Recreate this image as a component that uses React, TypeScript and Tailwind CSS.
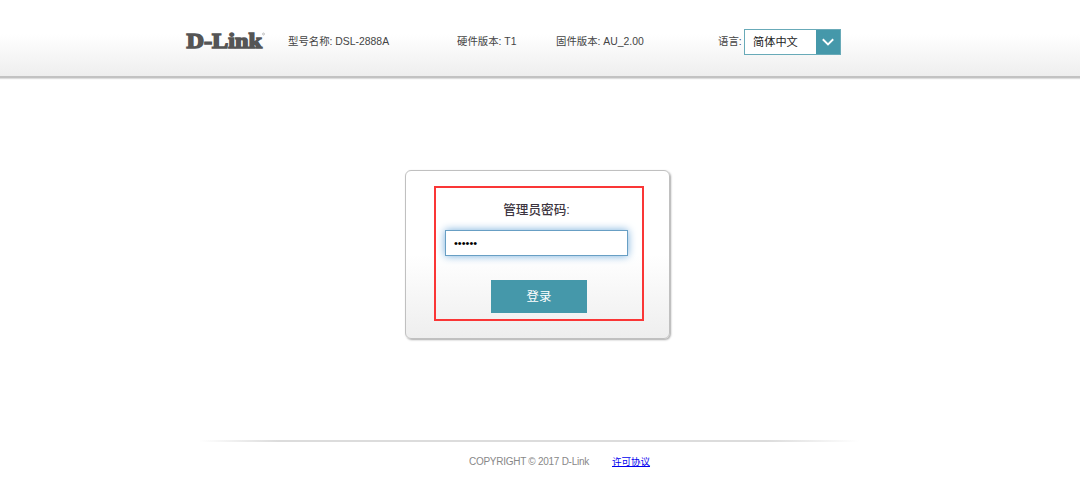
import { useState } from 'react'

const info = [
  { label: '型号名称', value: 'DSL-2888A', width: 'w-[169px]' },
  { label: '硬件版本', value: 'T1', width: 'w-[99px]' },
  { label: '固件版本', value: 'AU_2.00', width: 'w-[162px]' },
]

function Logo() {
  return (
    <svg width="84" height="28" viewBox="0 0 84 28" className="shrink-0" role="img" aria-label="D-Link">
      <text
        x="1.5"
        y="19.8"
        textLength="75.5"
        lengthAdjust="spacingAndGlyphs"
        className="fill-[#555555] stroke-[#555555] font-['Liberation_Serif',serif] text-[21.8px] font-bold"
        strokeWidth="1.5"
      >
        D-Link
      </text>
      <circle cx="78.5" cy="6" r="1" fill="none" stroke="#aaaaaa" strokeWidth="0.7" />
    </svg>
  )
}

function LanguageSelect() {
  return (
    <button className="flex h-[26px] w-[97px] border border-[#68aab8] bg-white text-left">
      <span className="flex-1 pl-2 text-[11.2px] leading-6 text-[#222222]">简体中文</span>
      <span className="flex h-full w-6 items-center justify-center bg-[#4598aa]">
        <svg width="12" height="8" viewBox="0 0 12 8" fill="none" stroke="white" strokeWidth="1.9">
          <path d="M.8 1.3 6 6.4l5.2-5.1" />
        </svg>
      </span>
    </button>
  )
}

export default function App() {
  const [password, setPassword] = useState('123456')

  return (
    <div className="flex h-[478px] w-[1080px] flex-col overflow-hidden bg-white font-['Liberation_Sans','Noto_Sans_CJK_SC',sans-serif]">
      {/* Header */}
      <header className="h-[78px] shrink-0 border-b-2 border-[#c2c2c2] bg-linear-to-b from-white from-45% to-[#eeeeee] pt-7 pl-[185px] shadow-[0_1px_1px_#dddddd]">
        <div className="flex h-[27px] items-center text-[10.4px] whitespace-nowrap text-[#444444]">
          <div className="w-[103px] shrink-0">
            <Logo />
          </div>
          {info.map(item => (
            <p key={item.label} className={`${item.width} shrink-0`}>
              {item.label}: {item.value}
            </p>
          ))}
          <span className="w-[26px] shrink-0">语言:</span>
          <LanguageSelect />
        </div>
      </header>

      {/* Login */}
      <main className="flex flex-1 flex-col pt-[92px] pl-[405px]">
        <form
          onSubmit={e => e.preventDefault()}
          className="relative flex h-[169px] w-[265px] flex-col rounded-md border border-[#c0c0c0] bg-linear-to-b from-white from-50% to-[#eeeeee] pl-[39px] shadow-[1px_1px_2px_#aaaaaa]"
        >
          <label htmlFor="password" className="mt-[30px] w-[183px] text-center text-[12.6px] leading-[18px] font-medium text-[#3c3540]">
            管理员密码:
          </label>
          <input
            id="password"
            type="password"
            value={password}
            onChange={e => setPassword(e.target.value)}
            className="mt-[11px] h-[26px] w-[183px] border border-[#689fc4] bg-white px-2 text-[11px] text-black shadow-[0_0_8px_#75addb] outline-none"
          />
          <button
            type="submit"
            className="mt-6 ml-[46px] h-[33px] w-[96px] bg-[#4598aa] pt-px text-[12.4px] text-white"
          >
            登录
          </button>
          {/* Highlight frame */}
          <div className="pointer-events-none absolute top-[15px] left-7 h-[135px] w-[210px] border-2 border-[#fa3636]" />
        </form>
      </main>

      {/* Footer */}
      <footer className="h-[38px] shrink-0 pl-[199px]">
        <div className="h-0.5 w-[660px] bg-[linear-gradient(to_right,transparent,#dcdcdc_12%,#dcdcdc_86%,transparent)]" />
        <div className="mt-3 flex items-center pl-[270px] text-[9.5px] leading-4 whitespace-nowrap text-[#888888]">
          <span className="w-[143px] text-[10px] tracking-[-0.27px]">COPYRIGHT © 2017 D-Link</span>
          <a href="#license" className="text-[#0000ee] underline">
            许可协议
          </a>
        </div>
      </footer>
    </div>
  )
}
